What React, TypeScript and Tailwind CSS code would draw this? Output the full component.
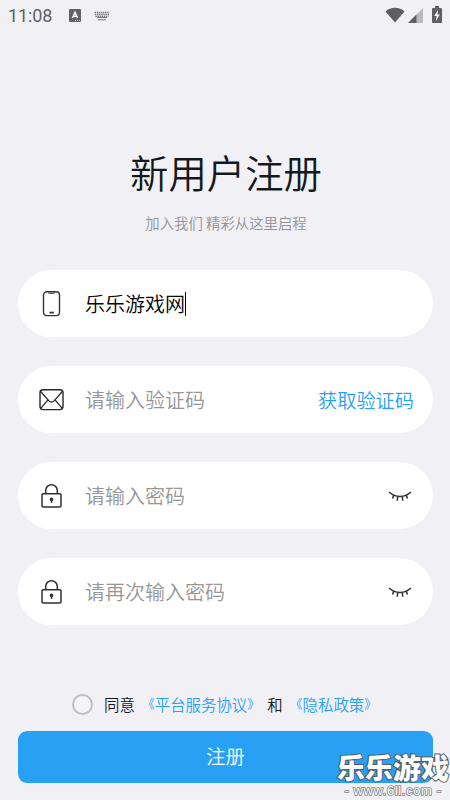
import React from "react";

function StatusBar() {
  return (
    <header className="flex h-[31px] items-center pl-2 pr-2 text-[#616163]">
      <span className="w-[60px] font-['Roboto',sans-serif] text-[18px] font-normal leading-[31px] tracking-[-0.1px]">11:08</span>
      <svg width="12" height="13" viewBox="0 0 12 13" className="ml-[1px]">
        <rect width="12" height="13" rx="1" fill="#626264" />
        <path d="M3.4 9L6 3.2L8.6 9M4.3 7.2H7.7" fill="none" stroke="#fff" strokeWidth="1.4" />
        <path d="M6 11.5H11" stroke="#c5c5c8" strokeWidth="1" strokeDasharray="1 1" />
      </svg>
      <svg width="16" height="10" viewBox="0 0 16 10" className="ml-[13px]">
        <path d="M0.5 1.5H15.5M1 3.5H15.5M1.5 5.5H14.5" stroke="#77777a" strokeWidth="1.6" strokeDasharray="1.4 .7" />
        <path d="M3 6.5H13M4 8.8H12" stroke="#77777a" strokeWidth="1" />
      </svg>
      <svg width="20" height="16" viewBox="0 0 20 16" className="-mt-[2px] ml-auto">
        <path d="M0.5 4.4C5.5-.5 14.5-.5 19.5 4.4L10 15.5Z" fill="#5f5f61" />
      </svg>
      <svg width="15" height="15" viewBox="0 0 15 15" className="-mt-[1px] ml-[3px]">
        <path d="M0 15L15 0V15Z" fill="#bbbbbe" />
        <path d="M0 15L8.5 6.5V15Z" fill="#5f5f61" />
      </svg>
      <svg width="10" height="17" viewBox="0 0 10 17" className="-mt-[2px] ml-[9px]">
        <path d="M3 0H7V2H9Q10 2 10 3V16Q10 17 9 17H1Q0 17 0 16V3Q0 2 1 2H3Z" fill="#5f5f61" />
        <path d="M6 4L2.2 10H4.5L4 15L7.8 8.6H5.5Z" fill="#f1f0f5" />
      </svg>
    </header>
  );
}

function PhoneIcon() {
  return (
    <svg width="28" height="28" viewBox="-0.5 0 28 28" fill="none" stroke="#303233" strokeWidth="1.4">
      <rect x="6" y="1.8" width="16" height="23.8" rx="3.4" />
      <path d="M10.5 2.5Q11.2 3.3 12 3.3H16Q16.8 3.3 17.5 2.5" strokeWidth="1" />
      <path d="M12 22.6H16.3" strokeWidth="1.8" />
    </svg>
  );
}

function MailIcon() {
  return (
    <svg width="28" height="28" viewBox="-0.3 0 28 28" fill="none" stroke="#26292b" strokeWidth="1.4">
      <rect x="2.7" y="3.8" width="23" height="19.8" rx="3" />
      <path d="M3.4 5.5L11.4 14.6Q14.2 17.4 17 14.6L25 5.5M3.4 22.4L10.3 14.4M25 22.4L18.1 14.4" strokeWidth="1.3" />
    </svg>
  );
}

function LockIcon() {
  return (
    <svg width="28" height="28" viewBox="-0.5 0 28 28" fill="none" stroke="#303233" strokeWidth="1.5">
      <rect x="4.5" y="11.8" width="19" height="13.2" rx="1.2" />
      <path d="M8.2 11.8V8.5A5.8 5.8 0 0 1 19.8 8.5V11.8" />
      <circle cx="14" cy="17.4" r="1.8" fill="#303233" stroke="none" />
      <path d="M14 17V21" strokeWidth="1.4" />
    </svg>
  );
}

function ClosedEyeIcon() {
  return (
    <svg width="24" height="12" viewBox="0 0 24 12" fill="none" stroke="#303233" strokeWidth="1.5" className="mr-[2px]">
      <path d="M1 2Q6 6.4 12 6.4T23 2" />
      <path d="M5.8 5.1L4.5 8.4M9.7 6.3L9.3 10.7M14.3 6.3L14.7 10.7M18.2 5.1L19.5 8.4" />
    </svg>
  );
}

function Field({ icon, children, end }: { icon: React.ReactNode; children: React.ReactNode; end?: React.ReactNode }) {
  return (
    <div className="flex h-[67px] items-center rounded-full bg-white pl-[19px] pr-[19px]">
      {icon}
      <div className="ml-5 flex items-center text-[20px] leading-[30px] text-[#969696]">{children}</div>
      <div className="ml-auto">{end}</div>
    </div>
  );
}

function PolicyLink({ title }: { title: string }) {
  return (
    <a className="flex items-center text-[#28a1f5]">
      <span className="text-[12.5px]">《</span>
      <span>{title}</span>
      <span className="text-[12.5px]">》</span>
    </a>
  );
}

export default function App() {
  return (
    <main className="relative flex h-[800px] w-[450px] flex-col overflow-hidden bg-[#f1f0f5] font-['Noto_Sans_CJK_SC_DemiLight','Noto_Sans_CJK_SC_Light','Noto_Sans_CJK_SC',sans-serif] font-light">
      <StatusBar />
      <h1 className="mt-[111px] h-[58px] pl-[2px] text-center text-[38.4px] leading-[58px] text-[#15191c]">新用户注册</h1>
      <p className="mt-[12px] h-[22px] pl-[2px] text-center text-[14.4px] leading-[22px] text-[#939397]">加入我们 精彩从这里启程</p>
      <form className="mt-[36px] flex flex-col gap-[29px] pl-[18px] pr-[17px]">
        <Field icon={<PhoneIcon />}>
          <span className="text-black">乐乐游戏网</span>
          <span className="h-6 w-px bg-black" />
        </Field>
        <Field icon={<MailIcon />} end={<span className="text-[19.2px] leading-[30px] text-[#28a1f5]">获取验证码</span>}>请输入验证码</Field>
        <Field icon={<LockIcon />} end={<ClosedEyeIcon />}>请输入密码</Field>
        <Field icon={<LockIcon />} end={<ClosedEyeIcon />}>请再次输入密码</Field>
      </form>
      <div className="mt-[67px] flex h-6 items-center pl-[72px] text-[15.4px] leading-6 text-[#15191c]">
        <span className="mr-[11px] size-[21px] rounded-full border-[2.5px] border-[#bfbfc1] bg-[#f5f5f7]" />
        <span className="mr-[7.5px]">同意</span>
        <PolicyLink title="平台服务协议" />
        <span className="mx-[7.5px]">和</span>
        <PolicyLink title="隐私政策" />
      </div>
      <button className="ml-[18px] mt-[15px] h-[52px] w-[415px] rounded-[9px] bg-[#28a1f5] pb-[2px] text-[19.2px] leading-[50px] text-white">注册</button>
      <div className="absolute left-[337px] top-[752px] flex w-[112px] flex-col text-center text-white [paint-order:stroke_fill]">
        <span className="h-[31px] whitespace-nowrap font-['Noto_Sans_CJK_SC',sans-serif] text-[28px] font-black leading-[31px] [-webkit-text-stroke:2px_#555b60]">乐乐游戏</span>
        <span className="h-4 whitespace-nowrap font-['Liberation_Sans',sans-serif] text-[13px] font-normal leading-4 tracking-[0.6px] [-webkit-text-stroke:1.6px_#85858a]">- www.6ll.com -</span>
      </div>
    </main>
  );
}
